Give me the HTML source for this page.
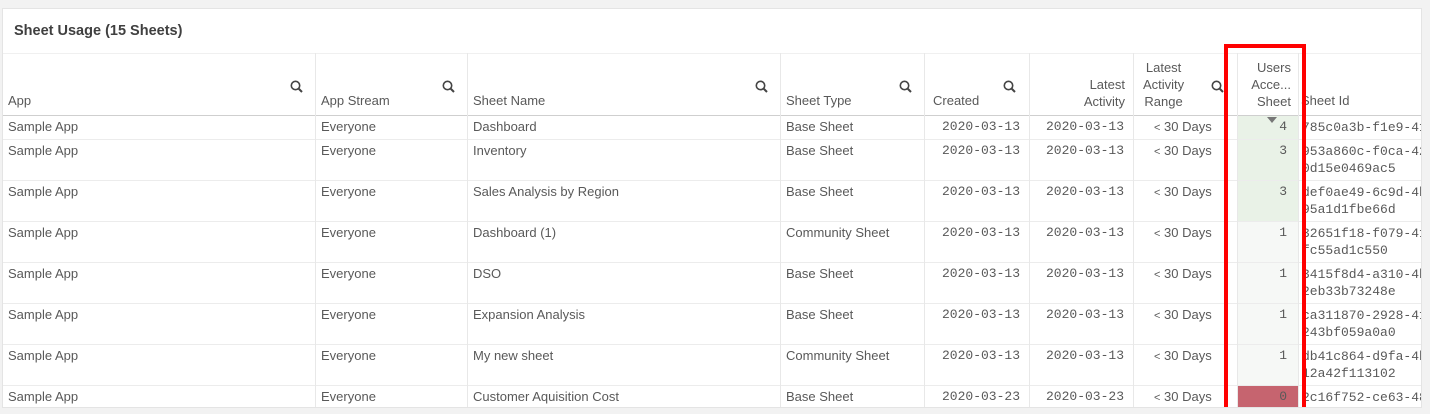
<!DOCTYPE html><html><head><style>
body{margin:0;width:1430px;height:414px;background:#f2f2f2;overflow:hidden;font-family:"Liberation Sans",sans-serif;color:#595959;font-size:13px}
.p{position:absolute;left:2px;top:8px;width:1420px;height:400px;background:#fff;border:1px solid #e4e4e4;box-sizing:border-box;overflow:hidden}
.t{position:absolute;left:11px;top:14px;font-weight:bold;font-size:14.5px;color:#404040}
.a{position:absolute;white-space:nowrap}
.vl{position:absolute;top:44px;bottom:0;width:1px;background:#e8e8e8}
.hl{position:absolute;left:0;right:0;height:1px;background:#ececec}
.m{font-family:"Liberation Mono",monospace;font-size:13px}
.s{position:absolute;width:13px;height:13px}
</style></head><body>
<div class="p">
<div class="t">Sheet Usage (15 Sheets)</div>
<div class="hl" style="top:44px;background:#f0f0f0"></div>
<div class="hl" style="top:106px;background:#cfcfcf"></div>
<div style="position:absolute;left:1235px;top:107px;width:61px;height:105px;background:#e9f2e7"></div>
<div style="position:absolute;left:1235px;top:212px;width:61px;height:164px;background:#f6f8f6"></div>
<div style="position:absolute;left:1235px;top:376px;width:61px;height:24px;background:#c6646f"></div>
<div class="hl" style="top:130px"></div><div class="hl" style="top:171px"></div><div class="hl" style="top:212px"></div><div class="hl" style="top:253px"></div><div class="hl" style="top:294px"></div><div class="hl" style="top:335px"></div><div class="hl" style="top:376px"></div>
<div class="vl" style="left:312px"></div><div class="vl" style="left:464px"></div><div class="vl" style="left:777px"></div><div class="vl" style="left:921px"></div><div class="vl" style="left:1026px"></div><div class="vl" style="left:1130px"></div><div class="vl" style="left:1234px"></div><div class="vl" style="left:1295px"></div>
<div class="a" style="left:5px;top:84px">App</div>
<div class="a" style="left:318px;top:84px">App Stream</div>
<div class="a" style="left:470px;top:84px">Sheet Name</div>
<div class="a" style="left:783px;top:84px">Sheet Type</div>
<div class="a" style="left:930px;top:84px">Created</div>
<div class="a" style="right:296px;top:67px;text-align:right;line-height:17px">Latest<br>Activity</div>
<div class="a" style="left:1140px;top:50px;text-align:center;line-height:17px">Latest<br>Activity<br>Range</div>
<div class="a" style="left:1240px;top:50px;width:48px;text-align:right;line-height:17px">Users<br>Acce...<br>Sheet</div>
<div class="a" style="left:1298px;top:84px">Sheet Id</div>
<svg class="s" style="left:287px;top:71px" viewBox="0 0 13 13"><circle cx="5.5" cy="5.5" r="4.2" fill="none" stroke="#444" stroke-width="1.6"/><path d="M8.5 8.5L12 12" stroke="#444" stroke-width="2"/></svg>
<svg class="s" style="left:439px;top:71px" viewBox="0 0 13 13"><circle cx="5.5" cy="5.5" r="4.2" fill="none" stroke="#444" stroke-width="1.6"/><path d="M8.5 8.5L12 12" stroke="#444" stroke-width="2"/></svg>
<svg class="s" style="left:752px;top:71px" viewBox="0 0 13 13"><circle cx="5.5" cy="5.5" r="4.2" fill="none" stroke="#444" stroke-width="1.6"/><path d="M8.5 8.5L12 12" stroke="#444" stroke-width="2"/></svg>
<svg class="s" style="left:896px;top:71px" viewBox="0 0 13 13"><circle cx="5.5" cy="5.5" r="4.2" fill="none" stroke="#444" stroke-width="1.6"/><path d="M8.5 8.5L12 12" stroke="#444" stroke-width="2"/></svg>
<svg class="s" style="left:1000px;top:71px" viewBox="0 0 13 13"><circle cx="5.5" cy="5.5" r="4.2" fill="none" stroke="#444" stroke-width="1.6"/><path d="M8.5 8.5L12 12" stroke="#444" stroke-width="2"/></svg>
<svg class="s" style="left:1208px;top:71px" viewBox="0 0 13 13"><circle cx="5.5" cy="5.5" r="4.2" fill="none" stroke="#444" stroke-width="1.6"/><path d="M8.5 8.5L12 12" stroke="#444" stroke-width="2"/></svg>
<svg style="position:absolute;left:1264px;top:108px" width="10" height="7"><path d="M0 0H10L5 6Z" fill="#777"/></svg>
<div id="rows"></div>
<div style="position:absolute;left:1221px;top:35px;width:82px;height:367px;border:4px solid #f00;box-sizing:border-box"></div>
</div>
<script>
var d=[["Dashboard","Base Sheet","2020-03-13","4","785c0a3b-f1e9-41",""],["Inventory","Base Sheet","2020-03-13","3","953a860c-f0ca-42","0d15e0469ac5"],["Sales Analysis by Region","Base Sheet","2020-03-13","3","def0ae49-6c9d-4b","95a1d1fbe66d"],["Dashboard (1)","Community Sheet","2020-03-13","1","32651f18-f079-41","fc55ad1c550"],["DSO","Base Sheet","2020-03-13","1","3415f8d4-a310-4b","2eb33b73248e"],["Expansion Analysis","Base Sheet","2020-03-13","1","ca311870-2928-41","243bf059a0a0"],["My new sheet","Community Sheet","2020-03-13","1","db41c864-d9fa-4b","12a42f113102"],["Customer Aquisition Cost","Base Sheet","2020-03-23","0","2c16f752-ce63-48",""]];
var h="",tops=[110,134,175,216,257,298,339,380];
d.forEach(function(r,i){var y=tops[i];
h+='<div class="a" style="left:5px;top:'+y+'px">Sample App</div><div class="a" style="left:318px;top:'+y+'px">Everyone</div><div class="a" style="left:470px;top:'+y+'px">'+r[0]+'</div><div class="a" style="left:783px;top:'+y+'px">'+r[1]+'</div><div class="a m" style="right:401px;top:'+y+'px">'+r[2]+'</div><div class="a m" style="right:297px;top:'+y+'px">'+r[2]+'</div><div class="a" style="left:1151px;top:'+y+'px;width:84px;overflow:hidden"><span style="font-size:11px">&lt;</span> 30 Days</div><div class="a m" style="right:134px;top:'+y+'px">'+r[3]+'</div><div class="a m" style="left:1299px;top:'+y+'px;line-height:17px">'+r[4]+'<br>'+r[5]+'</div>';});
document.getElementById('rows').innerHTML=h;
</script>
</body></html>
